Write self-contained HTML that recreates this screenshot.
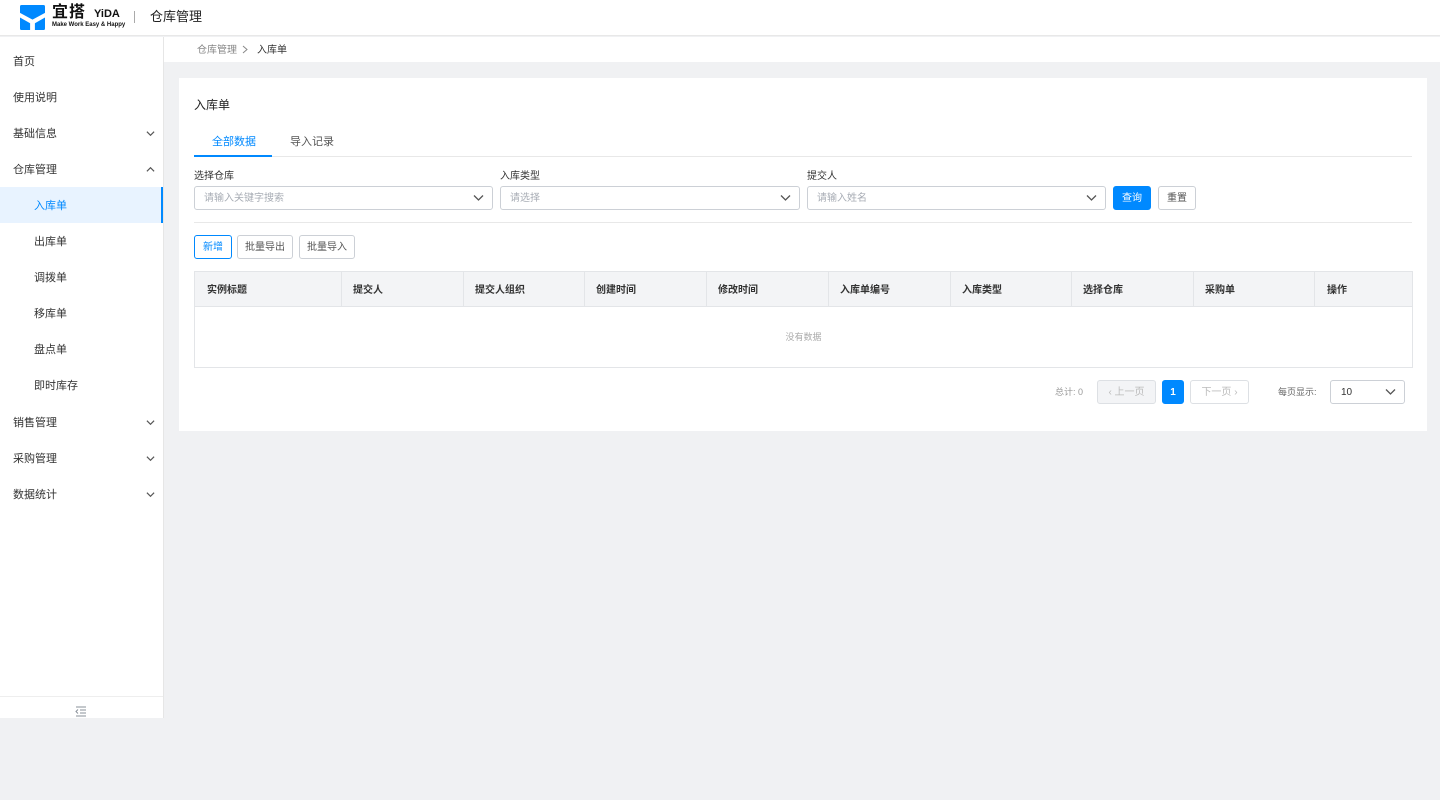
<!DOCTYPE html>
<html><head><meta charset="utf-8"><style>
*{box-sizing:border-box;margin:0;padding:0}
body{width:1440px;height:800px;background:#f0f1f3;font-family:"Liberation Sans","Noto Sans CJK SC",sans-serif;font-size:12px;color:#333;position:relative;overflow:hidden;line-height:1}
.abs{position:absolute}
.hdr{left:0;top:0;width:1440px;height:36px;background:#fff;border-bottom:1px solid #e8e8e8}
.side{left:0;top:37px;width:164px;height:681px;background:#fff;border-right:1px solid #e6e6e6}
.mi{position:absolute;left:0;width:163px;height:36px;line-height:38px;padding-left:13px;font-size:11px;color:#333}
.mi.sub{padding-left:34px}
.mi.act{background:#e8f3ff;color:#0089ff;border-right:2px solid #0089ff}
.chev{position:absolute;right:8px;top:14px}
.bc{left:164px;top:37px;width:1276px;height:25px;background:#fff}
.card{left:179px;top:78px;width:1248px;height:353px;background:#fff}
.inp{position:absolute;height:24px;border:1px solid #ccd0d6;border-radius:3px;color:#a8adb5;font-size:10px;line-height:24px;padding-left:9px}
.inp svg{position:absolute;right:8px;top:7px}
.btn{position:absolute;height:24px;border:1px solid #ccd0d6;border-radius:3px;font-size:10px;line-height:24px;text-align:center;color:#555;background:#fff}
.th{position:absolute;top:271px;height:36px;line-height:39px;font-size:10px;font-weight:600;color:#333}
</style></head><body>
<div class="abs hdr">
 <svg class="abs" style="left:20px;top:5px" width="25" height="25" viewBox="0 0 24 24"><rect width="24" height="24" rx="1.5" fill="#0089ff"/><path d="M0 7.5 L12 14 L24 7.5 L24 12 L14.3 17.5 L14.3 24 L9.7 24 L9.7 17.5 L0 12 Z" fill="#fff"/></svg>
 <div class="abs" style="left:52px;top:5px;font-size:16px;line-height:16px;font-weight:bold;color:#111;letter-spacing:1px">宜搭</div>
 <div class="abs" style="left:94px;top:9px;font-size:11px;line-height:11px;font-weight:bold;color:#111">YiDA</div>
 <div class="abs" style="left:52px;top:22px;font-size:6px;line-height:6px;font-weight:bold;color:#111;white-space:nowrap">Make Work Easy &amp; Happy</div>
 <div class="abs" style="left:134px;top:11px;width:1px;height:12px;background:#aaa"></div>
 <div class="abs" style="left:150px;top:10px;font-size:13px;line-height:14px;color:#222">仓库管理</div>
</div>
<div class="abs side">
 <div class="mi" style="top:6px">首页</div>
 <div class="mi" style="top:42px">使用说明</div>
 <div class="mi" style="top:78px">基础信息<svg class="chev" width="9" height="9" viewBox="0 0 10 10"><path d="M1 3 L5 7 L9 3" stroke="#555" fill="none" stroke-width="1.3"/></svg></div>
 <div class="mi" style="top:114px">仓库管理<svg class="chev" width="9" height="9" viewBox="0 0 10 10"><path d="M1 7 L5 3 L9 7" stroke="#555" fill="none" stroke-width="1.3"/></svg></div>
 <div class="mi sub act" style="top:150px">入库单</div>
 <div class="mi sub" style="top:186px">出库单</div>
 <div class="mi sub" style="top:222px">调拨单</div>
 <div class="mi sub" style="top:258px">移库单</div>
 <div class="mi sub" style="top:294px">盘点单</div>
 <div class="mi sub" style="top:330px">即时库存</div>
 <div class="mi" style="top:367px">销售管理<svg class="chev" width="9" height="9" viewBox="0 0 10 10"><path d="M1 3 L5 7 L9 3" stroke="#555" fill="none" stroke-width="1.3"/></svg></div>
 <div class="mi" style="top:403px">采购管理<svg class="chev" width="9" height="9" viewBox="0 0 10 10"><path d="M1 3 L5 7 L9 3" stroke="#555" fill="none" stroke-width="1.3"/></svg></div>
 <div class="mi" style="top:439px">数据统计<svg class="chev" width="9" height="9" viewBox="0 0 10 10"><path d="M1 3 L5 7 L9 3" stroke="#555" fill="none" stroke-width="1.3"/></svg></div>
 <div class="abs" style="left:0;top:659px;width:163px;height:1px;background:#eee"></div>
 <svg class="abs" style="left:75px;top:669px" width="12" height="11" viewBox="0 0 12 11"><path d="M1 1H11M5 4H11M5 7H11M1 10H11M3 3.5L1 5.5L3 7.5" stroke="#8a9099" fill="none" stroke-width="1"/></svg>
</div>
<div class="abs bc"><span class="abs" style="left:33px;top:9px;font-size:10px;color:#888">仓库管理</span><svg class="abs" style="left:78px;top:8px" width="6" height="9" viewBox="0 0 6 9"><path d="M1 1L5 4.5L1 8" stroke="#888" fill="none" stroke-width="1"/></svg><span class="abs" style="left:93px;top:9px;font-size:10px;color:#333">入库单</span></div>
<div class="abs card">
 <div class="abs" style="left:15px;top:21px;font-size:12px;color:#222">入库单</div>
 <div class="abs" style="left:33px;top:59px;font-size:11px;color:#0089ff">全部数据</div>
 <div class="abs" style="left:111px;top:59px;font-size:11px;color:#555">导入记录</div>
 <div class="abs" style="left:15px;top:78px;width:1218px;height:1px;background:#e8e8e8"></div>
 <div class="abs" style="left:15px;top:77px;width:78px;height:2px;background:#0089ff"></div>
 <div class="abs" style="left:15px;top:94px;font-size:10px;color:#333">选择仓库</div>
 <div class="abs" style="left:321px;top:94px;font-size:10px;color:#333">入库类型</div>
 <div class="abs" style="left:628px;top:94px;font-size:10px;color:#333">提交人</div>
 <div class="inp" style="left:15px;top:108px;width:299px">请输入关键字搜索<svg width="11" height="8" viewBox="0 0 11 8"><path d="M1 1.5L5.5 6L10 1.5" stroke="#555" fill="none" stroke-width="1.3"/></svg></div>
 <div class="inp" style="left:321px;top:108px;width:300px">请选择<svg width="11" height="8" viewBox="0 0 11 8"><path d="M1 1.5L5.5 6L10 1.5" stroke="#555" fill="none" stroke-width="1.3"/></svg></div>
 <div class="inp" style="left:628px;top:108px;width:299px">请输入姓名<svg width="11" height="8" viewBox="0 0 11 8"><path d="M1 1.5L5.5 6L10 1.5" stroke="#555" fill="none" stroke-width="1.3"/></svg></div>
 <div class="btn" style="left:934px;top:108px;width:38px;background:#0089ff;border-color:#0089ff;color:#fff">查询</div>
 <div class="btn" style="left:979px;top:108px;width:38px">重置</div>
 <div class="abs" style="left:15px;top:144px;width:1218px;height:1px;background:#e8e8e8"></div>
 <div class="btn" style="left:15px;top:157px;width:38px;border-color:#0089ff;color:#0089ff">新增</div>
 <div class="btn" style="left:58px;top:157px;width:56px">批量导出</div>
 <div class="btn" style="left:120px;top:157px;width:56px">批量导入</div>
 <div class="abs" style="left:15px;top:193px;width:1219px;height:97px;border:1px solid #e3e5e8"></div>
 <div class="abs" style="left:16px;top:194px;width:1217px;height:35px;background:#f3f4f6;border-bottom:1px solid #e3e5e8"></div>
 <div class="abs" style="left:15px;top:255px;width:1219px;text-align:center;font-size:9px;color:#aaa">没有数据</div>
 <div class="abs" style="left:876px;top:310px;font-size:9px;color:#999">总计: 0</div>
 <div class="btn" style="left:918px;top:302px;width:59px;background:#f3f4f6;color:#bbb;border-color:#dde0e4">‹ 上一页</div>
 <div class="btn" style="left:983px;top:302px;width:22px;background:#0089ff;border-color:#0089ff;color:#fff;font-weight:bold">1</div>
 <div class="btn" style="left:1011px;top:302px;width:59px;color:#bbb;border-color:#dde0e4">下一页 ›</div>
 <div class="abs" style="left:1099px;top:310px;font-size:9px;color:#666">每页显示:</div>
 <div class="inp" style="left:1151px;top:302px;width:75px;color:#333;padding-left:10px">10<svg width="11" height="8" viewBox="0 0 11 8"><path d="M1 1.5L5.5 6L10 1.5" stroke="#555" fill="none" stroke-width="1.3"/></svg></div>
</div>
<div class="th" style="left:207px">实例标题</div>
<div class="th" style="left:353px">提交人</div>
<div class="th" style="left:475px">提交人组织</div>
<div class="th" style="left:596px">创建时间</div>
<div class="th" style="left:718px">修改时间</div>
<div class="th" style="left:840px">入库单编号</div>
<div class="th" style="left:962px">入库类型</div>
<div class="th" style="left:1083px">选择仓库</div>
<div class="th" style="left:1205px">采购单</div>
<div class="th" style="left:1327px">操作</div>
<div class="abs" style="left:341px;top:272px;width:1px;height:35px;background:#e3e5e8"></div>
<div class="abs" style="left:463px;top:272px;width:1px;height:35px;background:#e3e5e8"></div>
<div class="abs" style="left:584px;top:272px;width:1px;height:35px;background:#e3e5e8"></div>
<div class="abs" style="left:706px;top:272px;width:1px;height:35px;background:#e3e5e8"></div>
<div class="abs" style="left:828px;top:272px;width:1px;height:35px;background:#e3e5e8"></div>
<div class="abs" style="left:950px;top:272px;width:1px;height:35px;background:#e3e5e8"></div>
<div class="abs" style="left:1071px;top:272px;width:1px;height:35px;background:#e3e5e8"></div>
<div class="abs" style="left:1193px;top:272px;width:1px;height:35px;background:#e3e5e8"></div>
<div class="abs" style="left:1314px;top:272px;width:1px;height:35px;background:#e3e5e8"></div>
</body></html>
